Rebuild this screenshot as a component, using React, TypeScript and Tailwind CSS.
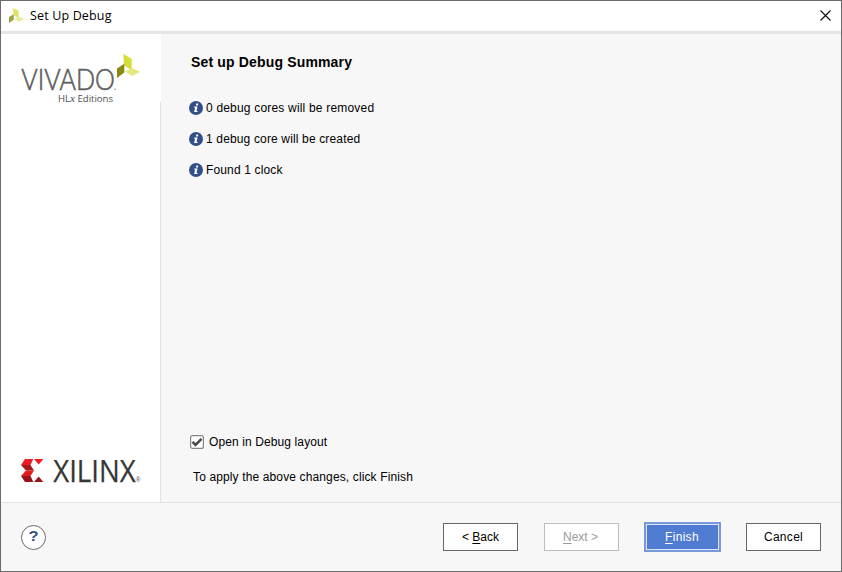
import React from "react";

function VivadoMark({ className }: { className: string }) {
  return (
    <svg className={className} viewBox="0 0 24 24" preserveAspectRatio="none">
      <path d="M6.5 0 L15.3 4.8 L15.3 16.2 L7.3 11.3 Z" fill="#d5df38" />
      <path d="M0 14.5 L7.6 9.8 L7.6 18.6 L0 24 Z" fill="#878a12" />
      <path d="M8.2 17.6 L15.8 14 L24 17.8 L16.2 22 Z" fill="#e3e97c" />
    </svg>
  );
}

function VivadoLogo() {
  return (
    <div className="relative h-[54px] w-[124px]">
      <svg className="block h-[54px] w-[124px]" viewBox="20 52 124 54">
        <text x="21.3" y="90" fontFamily="Lato, sans-serif" fontWeight="300" fontSize="29.5" textLength="93.5" lengthAdjust="spacingAndGlyphs" fill="#5e5f61" stroke="#5e5f61" strokeWidth="0.65">VIVADO</text>
        <circle cx="115" cy="89.3" r="0.7" fill="#77787a" />
        <text x="58" y="101.5" fontFamily="Open Sans, sans-serif" fontSize="9.3" textLength="55" lengthAdjust="spacingAndGlyphs" fill="#4c4d4f">HL<tspan fontStyle="italic" fontFamily="Liberation Serif, serif" fontSize="11">x</tspan> Editions</text>
      </svg>
      <VivadoMark className="absolute left-[97px] top-[2px] h-[24px] w-[23px]" />
    </div>
  );
}

function XilinxLogo() {
  return (
    <svg className="block h-[40px] w-[124px] overflow-visible" viewBox="20 450 124 40">
      <path d="M25 459 H33.3 L30.5 465 H21 Z" fill="#ed1c24" />
      <path d="M21 465 H30.5 L34 470.5 H26 Z" fill="#a5161d" />
      <path d="M26 470.5 H34 L30.5 476 H21 Z" fill="#e21b23" />
      <path d="M21 476 H30.5 L33.3 482 H25 Z" fill="#96151c" />
      <path d="M34 459 H43.3 L38.7 464.6 Z" fill="#ed1c24" />
      <path d="M34 482 H43.3 L38.7 476.4 Z" fill="#96151c" />
      <text x="53.2" y="481.9" fontFamily="Open Sans, sans-serif" fontSize="31.8" fill="#363636">
        <tspan textLength="82.5" lengthAdjust="spacingAndGlyphs" stroke="#363636" strokeWidth="0.25">XILINX</tspan>
      </text>
      <text x="135.8" y="481.5" fontFamily="Liberation Sans, sans-serif" fontSize="6.5" fill="#555">®</text>
    </svg>
  );
}

function InfoRow({ children, spacing }: { children: React.ReactNode; spacing: string }) {
  return (
    <div className="flex h-[31px] items-center">
      <svg className="mr-[3px] block h-[14px] w-[14px]" viewBox="0 0 14 14">
        <circle cx="7" cy="7" r="7" fill="#334f87" />
        <path d="M7.3 2.6 H9.3 L8.9 4.4 H6.9 Z M5.2 5.5 H8.5 L7.5 9.9 H8.7 L8.4 11.1 H5.1 L6.2 6.6 H5 Z" fill="#fff" />
      </svg>
      <span className={spacing}>{children}</span>
    </div>
  );
}

export default function App() {
  return (
    <div className="flex h-[572px] w-[842px] flex-col overflow-hidden border border-[#6b6a6c] bg-[#f7f7f7] font-['Liberation_Sans',Arial,sans-serif] text-[12px] leading-[14px] text-black">
      <header className="flex h-[33px] shrink-0 items-center border-b-[3px] border-[#e5e5e5] bg-white pl-[8px] pr-[10px]">
        <VivadoMark className="mb-[2px] block h-[15px] w-[15px] opacity-80" />
        <span className="ml-[6px] grow font-['Open_Sans',sans-serif] text-[12.5px] tracking-[0.15px]">Set Up Debug</span>
        <svg className="mb-[2px] block h-[11px] w-[11px]" viewBox="0 0 11 11">
          <path d="M0.5 0.5 L10.5 10.5 M10.5 0.5 L0.5 10.5" stroke="#111" strokeWidth="1.15" />
        </svg>
      </header>

      <div className="flex h-[468px] shrink-0">
        <aside className="flex w-[160px] shrink-0 flex-col bg-white">
          <div className="h-[68px] pl-[19px] pt-[18px]">
            <VivadoLogo />
          </div>
          <div className="flex grow flex-col justify-end border-r border-[#e2e2e2] pb-[12px] pl-[19px]">
            <XilinxLogo />
          </div>
        </aside>
        <main className="flex grow flex-col pl-[28px]">
          <h1 className="mt-[20px] pl-[2px] text-[14px] font-bold leading-[16px] tracking-[0.16px]">Set up Debug Summary</h1>
          <div className="mt-[22px]">
            <InfoRow spacing="tracking-[0.19px]">0 debug cores will be removed</InfoRow>
            <InfoRow spacing="tracking-[0.15px]">1 debug core will be created</InfoRow>
            <InfoRow spacing="tracking-[0.14px]">Found 1 clock</InfoRow>
          </div>
          <div className="mt-auto flex h-[14px] items-center">
            <svg className="ml-[1px] mr-[5px] block h-[14px] w-[14px] shrink-0" viewBox="0 0 14 14">
              <rect x="0.6" y="0.6" width="12.8" height="12.8" rx="2" fill="#fff" stroke="#858585" strokeWidth="1.2" />
              <path d="M2.5 6.8 L5.5 9.8 L11.5 3.8" fill="none" stroke="#4a4a4a" strokeWidth="2.6" />
            </svg>
            <span className="tracking-[0.11px]">Open in Debug layout</span>
          </div>
          <p className="mb-[18px] mt-[21px] pl-[4px] tracking-[0.13px]">To apply the above changes, click Finish</p>
        </main>
      </div>

      <footer className="flex grow items-center border-t border-[#e2e2e2] pl-[20px] pr-[20px]">
        <button className="flex h-[25px] w-[25px] items-center justify-center rounded-full border border-[#6b6b6b] bg-white pb-[2px] text-[15px] font-bold text-[#334f87]"><span className="scale-x-110">?</span></button>
        <div className="ml-auto flex items-center">
          <button className="h-[28px] w-[75px] border border-[#666] bg-white">&lt; <u className="underline-offset-2">B</u>ack</button>
          <button className="ml-[26px] h-[28px] w-[75px] border border-[#bdbdbd] bg-white pr-[2px] text-[#9b9b9b]"><u className="underline-offset-2">N</u>ext &gt;</button>
          <button className="ml-[25px] flex h-[30px] w-[77px] border-2 border-[#7899d9] bg-[#4f7bd0] text-white">
            <span className="flex h-full w-full items-center justify-center border border-[#dce6f8] pr-[1px] tracking-[0.3px]"><u className="underline-offset-2">F</u>inish</span>
          </button>
          <button className="ml-[25px] h-[28px] w-[75px] border border-[#666] bg-white tracking-[0.3px]">Cancel</button>
        </div>
      </footer>
    </div>
  );
}
